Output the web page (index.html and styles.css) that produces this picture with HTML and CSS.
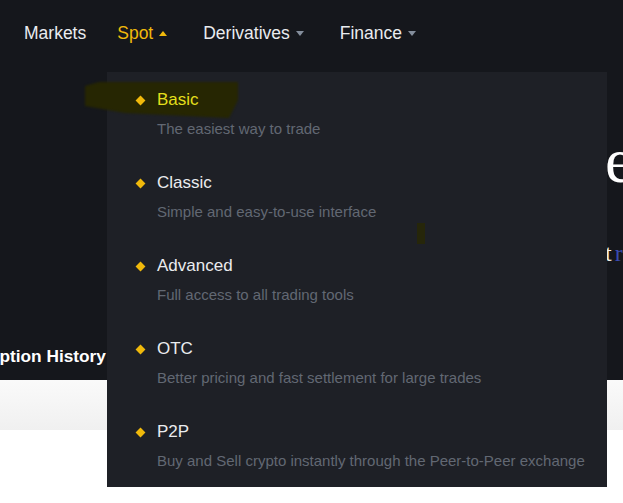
FILE: index.html
```html
<!DOCTYPE html>
<html>
<head>
<meta charset="utf-8">
<link rel="stylesheet" href="styles.css">
</head>
<body>
<div class="page">
  <header class="top">
    <nav class="nav">
      <a class="nav-item">Markets</a>
      <a class="nav-item active">Spot<span class="caret up"></span></a>
      <a class="nav-item">Derivatives<span class="caret"></span></a>
      <a class="nav-item">Finance<span class="caret"></span></a>
    </nav>
    <div class="hero">
      <h1 class="hero-title">easy</h1>
      <p class="hero-sub">t<span class="link">r</span>ade</p>
    </div>
    <div class="tabs">
      <span class="tab">Subscription History</span>
    </div>
  </header>
  <div class="band"></div>
  <div class="rest"></div>

  <div class="menu">
    <svg class="marker" width="160" height="42" viewBox="0 0 160 42"><polygon points="0,6 14,2 153,2 153,20 144,38 40,33 0,26" fill="#262602"/></svg>
    <span class="marker-dot"></span>
    <div class="menu-item hover">
      <span class="diamond"></span>
      <div class="menu-text">
        <div class="menu-title">Basic</div>
        <div class="menu-desc">The easiest way to trade</div>
      </div>
    </div>
    <div class="menu-item">
      <span class="diamond"></span>
      <div class="menu-text">
        <div class="menu-title">Classic</div>
        <div class="menu-desc">Simple and easy-to-use interface</div>
      </div>
    </div>
    <div class="menu-item">
      <span class="diamond"></span>
      <div class="menu-text">
        <div class="menu-title">Advanced</div>
        <div class="menu-desc">Full access to all trading tools</div>
      </div>
    </div>
    <div class="menu-item">
      <span class="diamond"></span>
      <div class="menu-text">
        <div class="menu-title">OTC</div>
        <div class="menu-desc">Better pricing and fast settlement for large trades</div>
      </div>
    </div>
    <div class="menu-item">
      <span class="diamond"></span>
      <div class="menu-text">
        <div class="menu-title">P2P</div>
        <div class="menu-desc">Buy and Sell crypto instantly through the Peer-to-Peer exchange</div>
      </div>
    </div>
  </div>
</div>
</body>
</html>
```
FILE: styles.css
```css
html, body {
  margin: 0;
  padding: 0;
  overflow: hidden;
  background: #ffffff;
}
.page {
  position: relative;
  width: 623px;
  height: 503px;
  overflow: hidden;
  font-family: "Liberation Sans", Arial, sans-serif;
}
.top {
  background: #15171c;
  height: 380px;
  display: flex;
  flex-direction: column;
}
.nav {
  height: 66px;
  display: flex;
  align-items: center;
  padding-left: 24px;
  gap: 31px;
}
.nav-item {
  font-size: 17.5px;
  color: #eaecef;
  display: flex;
  align-items: center;
  white-space: nowrap;
}
.nav-item .caret {
  width: 0;
  height: 0;
  margin-left: 6px;
  margin-right: 5px;
  border-left: 4px solid transparent;
  border-right: 4px solid transparent;
  border-top: 5px solid #848e9c;
}
.nav-item.active {
  color: #f0b90b;
}
.nav-item .caret.up {
  border-top: none;
  border-bottom: 5px solid #f0b90b;
}
.hero {
  padding-left: 605px;
  white-space: nowrap;
  color: #ffffff;
}
.hero-title {
  margin: 63px 0 0;
  font-family: "Liberation Serif", "Times New Roman", serif;
  font-weight: 400;
  font-size: 64px;
  line-height: 64px;
}
.hero-sub {
  margin: 49px 0 0;
  font-family: "Liberation Serif", "Times New Roman", serif;
  font-size: 24px;
  line-height: 22px;
  letter-spacing: 3px;
  color: #f4efe6;
}
.hero-sub .link {
  color: #3a4bb0;
}
.tabs {
  margin-top: auto;
  margin-bottom: 12px;
  white-space: nowrap;
}
.tab {
  display: inline-block;
  margin-left: -64px;
  font-size: 17.3px;
  font-weight: 700;
  color: #ffffff;
  line-height: 24px;
}
.band {
  height: 50px;
  background: linear-gradient(#fafafa, #f0f0f0);
}
.rest {
  background: #ffffff;
}
.menu {
  position: absolute;
  left: 107px;
  top: 72px;
  width: 500px;
  height: 415px;
  background: #1e2026;
}
.marker {
  position: absolute;
  left: -22px;
  top: 8px;
  filter: blur(0.8px);
}
.marker-dot {
  position: absolute;
  left: 310px;
  top: 151px;
  width: 8px;
  height: 21px;
  background: #26260a;
}
.menu-item {
  position: relative;
  display: flex;
  align-items: flex-start;
  gap: 12px;
  padding: 16px 20px 15px 28px;
  height: 52px;
}
.diamond {
  flex: none;
  width: 10px;
  height: 24px;
  position: relative;
}
.diamond::after {
  content: "";
  position: absolute;
  left: 1.5px;
  top: 8.5px;
  width: 7px;
  height: 7px;
  background: #f0b90b;
  transform: rotate(45deg);
}
.menu-text {
  display: flex;
  flex-direction: column;
  white-space: nowrap;
}
.menu-title {
  font-size: 17px;
  line-height: 24px;
  color: #eaecef;
}
.menu-item.hover .menu-title {
  color: #e3df1c;
}
.menu-desc {
  margin-top: 6px;
  font-size: 15px;
  line-height: 22px;
  color: #626873;
}
```
